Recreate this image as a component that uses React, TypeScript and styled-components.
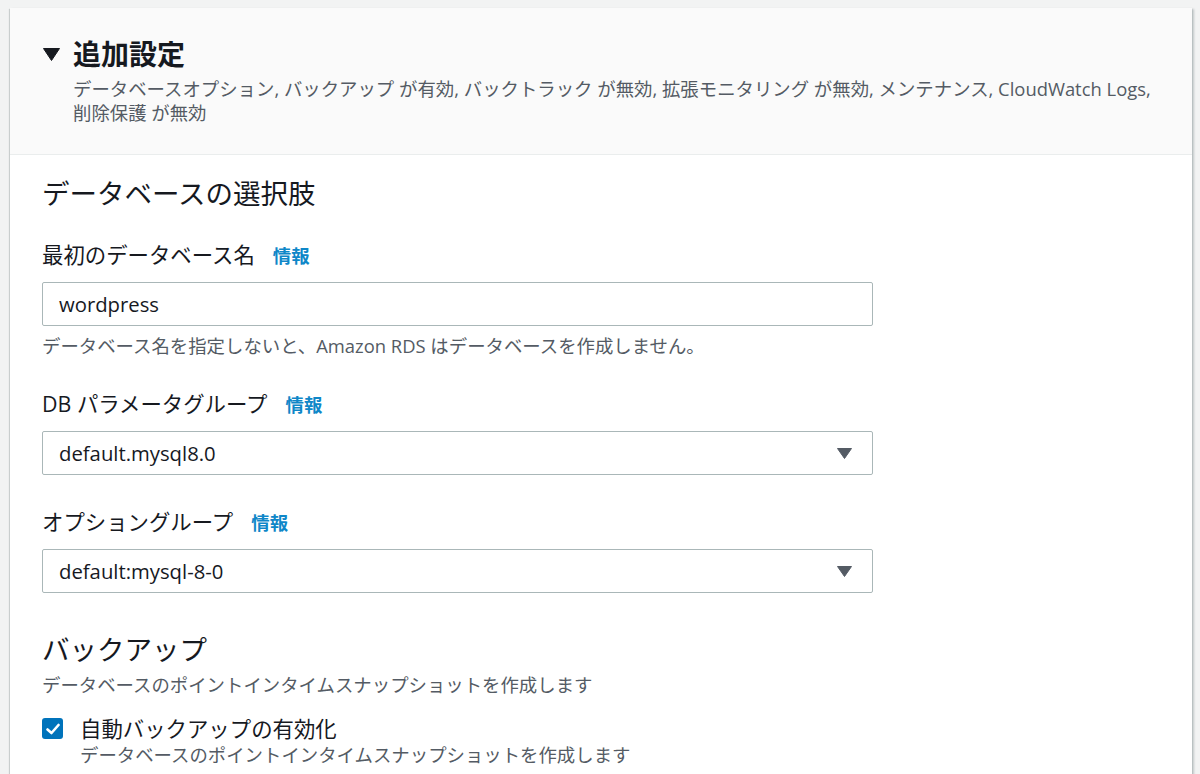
import styled, { createGlobalStyle } from "styled-components"

const GlobalStyle = createGlobalStyle`
  html, body {
    margin: 0;
    padding: 0;
    background: #f2f3f3;
  }
  body {
    font-family: "Open Sans", "Noto Sans CJK JP", sans-serif;
    color: #16191f;
  }
`

const Page = styled.div`
  padding: 8px 8px 0 10px;
  height: 774px;
  box-sizing: border-box;
  overflow: hidden;
`

const Card = styled.div`
  background: #fff;
  box-shadow: 0 1px 1px 0 rgba(0, 28, 36, 0.3), 2px 1px 2px 0 rgba(0, 28, 36, 0.2),
    -1px 1px 1px 0 rgba(0, 28, 36, 0.12);
  min-height: 800px;
`

const Header = styled.div`
  background: #fafafa;
  border-bottom: 1px solid #eaeded;
  padding: 28px 30px 29px 33px;
`

const TitleRow = styled.div`
  display: flex;
  align-items: center;
  gap: 13px;
`

const Caret = styled.svg`
  width: 17px;
  height: 13px;
  flex-shrink: 0;
`

const Title = styled.h2`
  margin: 0;
  font-size: 28px;
  line-height: 36px;
  font-weight: 700;
`

const Summary = styled.p`
  margin: 5px 0 0 30px;
  font-size: 18.4px;
  line-height: 24px;
  color: #545b64;
`

const Body = styled.div`
  padding: 21px 32px 0 32px;
  display: flex;
  flex-direction: column;
`

const SectionTitle = styled.h3<{ $top?: number }>`
  margin: ${(p) => p.$top ?? 0}px 0 0 0;
  font-size: 27.5px;
  line-height: 36px;
  font-weight: 400;
`

const SectionDesc = styled.p`
  margin: 5px 0 0 0;
  font-size: 18.4px;
  line-height: 24px;
  color: #545b64;
`

const Field = styled.div<{ $top: number }>`
  margin-top: ${(p) => p.$top}px;
  display: flex;
  flex-direction: column;
`

const Label = styled.div`
  display: flex;
  align-items: baseline;
  gap: 18px;
  font-size: 21.4px;
  line-height: 28px;
`

const InfoLink = styled.a`
  color: #0f87c8;
  font-weight: 700;
  font-size: 18.4px;
  text-decoration: none;
`

const Control = styled.div`
  margin-top: 12px;
  width: 831px;
  height: 44px;
  box-sizing: border-box;
  border: 1px solid #aab7b8;
  border-radius: 2px;
  background: #fff;
  display: flex;
  align-items: center;
  justify-content: space-between;
  padding: 0 20px 0 16px;
  font-size: 20.3px;
`

const Hint = styled.div`
  margin-top: 8px;
  font-size: 18.4px;
  line-height: 24px;
  color: #545b64;
`

const CheckRow = styled.div`
  margin-top: 18px;
  display: flex;
  gap: 17px;
`

const Box = styled.div`
  width: 21px;
  height: 21px;
  margin-top: 3px;
  border-radius: 3px;
  background: #0073bb;
  display: flex;
  align-items: center;
  justify-content: center;
  flex-shrink: 0;
`

const CheckText = styled.div`
  display: flex;
  flex-direction: column;
`

const CheckLabel = styled.div`
  font-size: 21.4px;
  line-height: 28px;
`

const CheckDesc = styled.div`
  font-size: 18.4px;
  line-height: 24px;
  color: #545b64;
`

const DownTriangle = ({ color }: { color: string }) => (
  <svg width="15" height="11" viewBox="0 0 15 11">
    <path d="M0.5 0.5 H14.5 L7.5 10.5 Z" fill={color} stroke={color} strokeLinejoin="round" />
  </svg>
)

const Select = ({ value }: { value: string }) => (
  <Control>
    <span>{value}</span>
    <DownTriangle color="#545b64" />
  </Control>
)

export default function App() {
  return (
    <>
      <GlobalStyle />
      <Page>
        <Card>
          <Header>
            <TitleRow>
              <Caret viewBox="0 0 17 13">
                <path d="M0.5 0.5 H16.5 L8.5 12.5 Z" fill="#16191f" stroke="#16191f" strokeLinejoin="round" />
              </Caret>
              <Title>追加設定</Title>
            </TitleRow>
            <Summary>
              データベースオプション, バックアップ が有効, バックトラック が無効, 拡張モニタリング が無効, メンテナンス, CloudWatch Logs, 削除保護 が無効
            </Summary>
          </Header>
          <Body>
            <SectionTitle>データベースの選択肢</SectionTitle>

            <Field $top={29}>
              <Label>
                最初のデータベース名 <InfoLink href="#">情報</InfoLink>
              </Label>
              <Control>
                <span>wordpress</span>
              </Control>
              <Hint>データベース名を指定しないと、Amazon RDS はデータベースを作成しません。</Hint>
            </Field>

            <Field $top={32}>
              <Label>
                DB パラメータグループ <InfoLink href="#">情報</InfoLink>
              </Label>
              <Select value="default.mysql8.0" />
            </Field>

            <Field $top={33}>
              <Label>
                オプショングループ <InfoLink href="#">情報</InfoLink>
              </Label>
              <Select value="default:mysql-8-0" />
            </Field>

            <SectionTitle $top={39}>バックアップ</SectionTitle>
            <SectionDesc>データベースのポイントインタイムスナップショットを作成します</SectionDesc>

            <CheckRow>
              <Box>
                <svg width="14" height="12" viewBox="0 0 14 12">
                  <path d="M1.5 6.5 L5.5 10 L12.5 2" fill="none" stroke="#fff" strokeWidth="2.6" strokeLinecap="round" strokeLinejoin="round" />
                </svg>
              </Box>
              <CheckText>
                <CheckLabel>自動バックアップの有効化</CheckLabel>
                <CheckDesc>データベースのポイントインタイムスナップショットを作成します</CheckDesc>
              </CheckText>
            </CheckRow>
          </Body>
        </Card>
      </Page>
    </>
  )
}
